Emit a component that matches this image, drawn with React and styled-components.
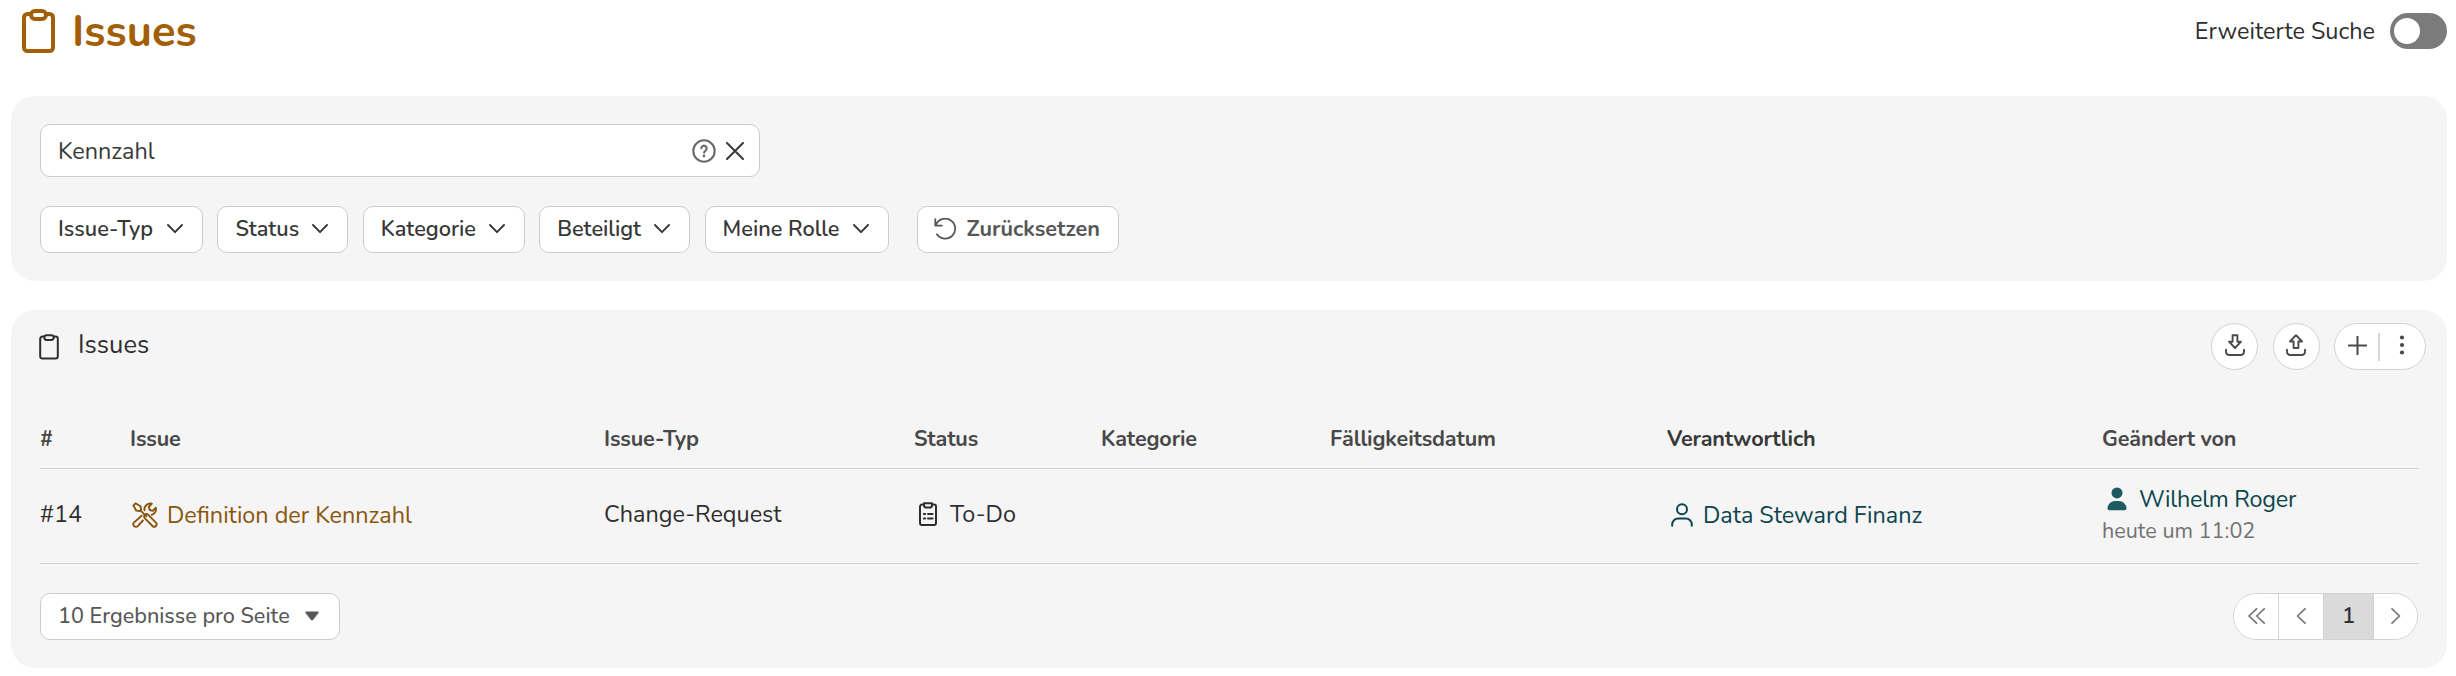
import React from "react";
import styled, { createGlobalStyle } from "styled-components";

const columns = ["#", "Issue", "Issue-Typ", "Status", "Kategorie", "Fälligkeitsdatum", "Verantwortlich", "Geändert von"];

const filters = [
    { label: "Issue-Typ", width: 163 },
    { label: "Status", width: 131 },
    { label: "Kategorie", width: 162 },
    { label: "Beteiligt", width: 151 },
    { label: "Meine Rolle", width: 184 },
];

/* 아이콘 */
const ClipboardIcon = () => (
    <Icon width="33" height="44" viewBox="0 0 33 44" $stroke={4}>
        <path d="M9 5H5.5A3.5 3.5 0 0 0 2 8.5v30A3.5 3.5 0 0 0 5.5 42h22a3.5 3.5 0 0 0 3.5-3.5v-30A3.5 3.5 0 0 0 27.5 5H24" />
        <rect x="9" y="2" width="15" height="8" rx="4" />
    </Icon>
);

const ClipboardSmallIcon = () => (
    <Icon width="20" height="26" viewBox="0 0 20 26" $stroke={2}>
        <path d="M5 2.5H3.5A2.3 2.3 0 0 0 1.2 4.8v17.4a2.3 2.3 0 0 0 2.3 2.3h13a2.3 2.3 0 0 0 2.3-2.3V4.8a2.3 2.3 0 0 0-2.3-2.3H15" />
        <rect x="5.3" y="1.2" width="9.4" height="4.8" rx="2.4" />
    </Icon>
);

const TodoIcon = () => (
    <Icon width="18" height="24" viewBox="0 0 18 24" $stroke={2}>
        <path d="M5 2.6H3A2 2 0 0 0 1 4.600V21a2 2 0 0 0 2 2h12a2 2 0 0 0 2-2V4.600a2 2 0 0 0-2-2h-2" />
        <path d="M5 1.2h8v2a2.4 2.4 0 0 1-2.4 2.4H7.400A2.4 2.4 0 0 1 5 3.200z" />
        <path d="M4.8 12.1h1.4M9 12.1h4.6M4.8 16.5h1.4M9 16.5h4.6" />
    </Icon>
);

const ToolsIcon = () => (
    <Icon width="26" height="26" viewBox="0 0 26 26" $stroke={1.9}>
        <path d="M1.4 3.6 3.5 1.3l5 2.9.6 3.7-1.2 1.2-3.7-.6zM8.7 8.700l5.6 5.6" />
        <path d="M12.9 16.4a2.4 2.4 0 0 1 3.4-3.5l7.6 7.7a2.4 2.4 0 0 1-3.4 3.4z" />
        <path d="M12.5 8.4c-.6-4 2.7-7.5 7.3-6.7l-3 3.3.9 3 3.1.9 3-3.2c.9 3.4-1.2 6.5-4.2 7.2" />
        <path d="M9.6 13.7 2.1 20.4a2.6 2.6 0 0 0 3.7 3.700l5.1-5.6" />
    </Icon>
);

const PersonIcon = () => (
    <Icon width="22" height="24" viewBox="0 0 22 24" $stroke={2}>
        <circle cx="11" cy="6.3" r="5" />
        <path d="M1.2 22.8v-1.3a6 6 0 0 1 6-6h7.6a6 6 0 0 1 6 6v1.3" />
    </Icon>
);

const PersonFillIcon = () => (
    <Icon width="20" height="24" viewBox="0 0 20 24" $stroke={0}>
        <circle cx="10" cy="5.9" r="5.5" fill="currentColor" />
        <path d="M.5 21.5a7.5 7.5 0 0 1 7.5-7.5h4a7.5 7.5 0 0 1 7.5 7.5q0 1.8-1.8 1.8H2.3Q.5 23.3.5 21.5z" fill="currentColor" />
    </Icon>
);

const ChevronIcon = () => (
    <Icon width="16" height="10" viewBox="0 0 16 10" $stroke={1.9}>
        <path d="m1 1 7 7.2L15 1" />
    </Icon>
);

const ResetIcon = () => (
    <Icon width="23" height="23" viewBox="0 0 23 23" $stroke={1.8}>
        <path d="M1.3 1.2v6.4h6.5M1.8 7.3A10 10 0 1 1 2.9 16.2" />
    </Icon>
);

const HelpIcon = () => (
    <Icon width="24" height="24" viewBox="0 0 24 24" $stroke={2.1}>
        <circle cx="12" cy="12" r="10.7" />
        <path d="M9.3 9.3A2.7 2.7 0 1 1 13.7 11.5c-1.100.7-1.6 1-1.6 2.3" />
        <path d="M12 16.9v.2" strokeWidth="2.6" />
    </Icon>
);

const CloseIcon = () => (
    <Icon width="18" height="18" viewBox="0 0 18 18" $stroke={2}>
        <path d="m1 1 16 16M17 1 1 17" />
    </Icon>
);

const ArrowTrayIcon = ({ up }) => (
    <Icon width="20" height="22" viewBox="0 0 20 22" $stroke={1.9}>
        {up ? (
            <path d="M7.6 14V7.5H4L10 1.2l6 6.3h-3.6V14z" />
        ) : (
            <path d="M7.6 1.2h4.8v6.5H16l-6 6.3-6-6.3h3.6z" />
        )}
        <path d="M1 15.8v1.9A3.3 3.3 0 0 0 4.3 21h11.4a3.3 3.3 0 0 0 3.3-3.3v-1.9" />
    </Icon>
);

const PlusIcon = () => (
    <Icon width="19" height="19" viewBox="0 0 19 19" $stroke={2}>
        <path d="M9.5.8v17.4M.8 9.5h17.4" />
    </Icon>
);

const DotsIcon = () => (
    <Icon width="6" height="20" viewBox="0 0 6 20" $stroke={0}>
        <g fill="currentColor">
            <circle cx="3" cy="2.5" r="2.1" />
            <circle cx="3" cy="10" r="2.1" />
            <circle cx="3" cy="17.5" r="2.1" />
        </g>
    </Icon>
);

const CaretIcon = () => (
    <Icon width="14" height="10" viewBox="0 0 14 10" $stroke={0}>
        <path d="M1.2.5h11.6q1.4.2.7 1.4L8.2 8.7q-1.2 1.2-2.4 0L.5 1.9Q-.2.7 1.2.5z" fill="currentColor" />
    </Icon>
);

const PageIcon = ({ d, width = 10 }) => (
    <Icon width={width} height="16" viewBox={`0 0 ${width} 16`} $stroke={1.7}>
        <path d={d} />
    </Icon>
);

function App() {
    return (
        <Page>
            <GlobalStyle />
            <Header>
                <Title>
                    <ClipboardIcon />
                    <h1>Issues</h1>
                </Title>
                <SwitchLabel>
                    Erweiterte Suche
                    <Switch role="switch" aria-checked="false">
                        <Knob />
                    </Switch>
                </SwitchLabel>
            </Header>

            {/* 검색 영역 */}
            <SearchPanel>
                <SearchField>
                    <SearchText>Kennzahl</SearchText>
                    <Tint $color="#6a6a6a">
                        <HelpIcon />
                    </Tint>
                    <CloseIcon />
                </SearchField>
                <FilterRow>
                    {filters.map((f) => (
                        <FilterButton key={f.label} $width={f.width}>
                            {f.label}
                            <ChevronIcon />
                        </FilterButton>
                    ))}
                    <ResetButton>
                        <ResetIcon />
                        Zurücksetzen
                    </ResetButton>
                </FilterRow>
            </SearchPanel>

            {/* 목록 영역 */}
            <ListPanel>
                <ListHeader>
                    <ListTitle>
                        <ClipboardSmallIcon />
                        <h2>Issues</h2>
                    </ListTitle>
                    <Actions>
                        <RoundButton>
                            <ArrowTrayIcon />
                        </RoundButton>
                        <RoundButton>
                            <ArrowTrayIcon up />
                        </RoundButton>
                        <ButtonGroup>
                            <PlusIcon />
                            <Divider />
                            <DotsIcon />
                        </ButtonGroup>
                    </Actions>
                </ListHeader>

                <HeadRow>
                    {columns.map((c) => (
                        <HeadCell key={c} $dark={c === "Verantwortlich"}>
                            {c}
                        </HeadCell>
                    ))}
                </HeadRow>
                <BodyRow>
                    <Cell>#14</Cell>
                    <LinkCell $color="#8a560c" $indent={1} $gap={9}>
                        <ToolsIcon />
                        Definition der Kennzahl
                    </LinkCell>
                    <Cell>Change-Request</Cell>
                    <Cell $indent={5} $gap={13}>
                        <TodoIcon />
                        To-Do
                    </Cell>
                    <Cell />
                    <Cell />
                    <LinkCell $color="#0b454b" $indent={4} $gap={10}>
                        <PersonIcon />
                        Data Steward Finanz
                    </LinkCell>
                    <ChangedCell>
                        <Editor>
                            <Tint $color="#1d5b61">
                                <PersonFillIcon />
                            </Tint>
                            Wilhelm Roger
                        </Editor>
                        <ChangedAt>heute um 11:02</ChangedAt>
                    </ChangedCell>
                </BodyRow>

                <ListFooter>
                    <PageSize>
                        10 Ergebnisse pro Seite
                        <CaretIcon />
                    </PageSize>
                    <Pagination>
                        <PageButton $width={44}>
                            <PageIcon width={17} d="M8.5.8 1 8l7.5 7.2M16.2.8 8.7 8l7.5 7.2" />
                        </PageButton>
                        <PageButton $width={45}>
                            <PageIcon d="M9 .8 1.5 8 9 15.2" />
                        </PageButton>
                        <PageButton $width={50} $active>
                            1
                        </PageButton>
                        <PageButton $width={44}>
                            <PageIcon d="M1 .8 8.5 8 1 15.2" />
                        </PageButton>
                    </Pagination>
                </ListFooter>
            </ListPanel>
        </Page>
    );
}

export default App;

const GlobalStyle = createGlobalStyle`
    * {
        box-sizing: border-box;
    }
    body {
        margin: 0;
        background: #fff;
    }
    h1, h2 {
        margin: 0;
        font: inherit;
    }
    button {
        margin: 0;
        font: inherit;
    }
`;

const Page = styled.div`
    width: 100%;
    height: 676px;
    padding: 0 9px 0 11px;
    overflow: hidden;
    font-family: "Nunito", "Open Sans", sans-serif;
    font-size: 23.4px;
    line-height: 30px;
    color: #2e2e2e;
    white-space: nowrap;
`;

const Icon = styled.svg`
    flex: none;
    display: block;
    fill: none;
    stroke: ${(props) => (props.$stroke ? "currentColor" : "none")};
    stroke-width: ${(props) => props.$stroke};
    stroke-linecap: round;
    stroke-linejoin: round;
`;

const Tint = styled.span`
    color: ${(props) => props.$color};
`;

const Header = styled.div`
    display: flex;
    justify-content: space-between;
    align-items: center;
    height: 62px;
    margin-bottom: 34px;
    padding-left: 11px;
`;

const Title = styled.div`
    display: flex;
    align-items: center;
    gap: 17px;
    color: #a25f06;
    font-size: 43.5px;
    font-weight: 700;
    line-height: 62px;

    h1 {
        padding-top: 2px;
    }
`;

const SwitchLabel = styled.label`
    display: flex;
    align-items: center;
    gap: 15px;
`;

const Switch = styled.span`
    display: flex;
    align-items: center;
    width: 57px;
    height: 36px;
    padding: 0 3px 0 4px;
    border-radius: 18px;
    background: #7b7b7b;
`;

const Knob = styled.span`
    width: 26px;
    height: 26px;
    border-radius: 50%;
    background: #fff;
`;

const Panel = styled.section`
    border-radius: 24px;
    background: #f5f5f5;
`;

const SearchPanel = styled(Panel)`
    height: 185px;
    margin-bottom: 29px;
    padding: 28px 29px;
`;

const SearchField = styled.div`
    display: flex;
    align-items: center;
    width: 720px;
    height: 53px;
    margin-bottom: 29px;
    padding: 0 15px 0 17px;
    border: 1px solid #cccccc;
    border-radius: 10px;
    background: #fff;
    color: #383838;
    gap: 10px;
`;

const SearchText = styled.span`
    flex: 1;
    padding-top: 1px;
`;

const FilterRow = styled.div`
    display: flex;
    gap: 14.4px;
`;

const FilterButton = styled.button`
    display: flex;
    align-items: center;
    justify-content: space-between;
    width: ${(props) => props.$width}px;
    height: 47px;
    padding: 0 19px 1px 17px;
    border: 1px solid #cccccc;
    border-radius: 10px;
    background: #fff;
    color: #383838;
    font-size: 21.7px;
    font-weight: 600;
`;

const ResetButton = styled(FilterButton)`
    width: 202px;
    margin-left: 14px;
    padding: 0 18px 1px 16px;
    color: #575757;
    font-weight: 700;
`;

const ListPanel = styled(Panel)`
    height: 358px;
    padding: 0 29px;
`;

const ListHeader = styled.div`
    display: flex;
    align-items: center;
    justify-content: space-between;
    height: 73px;
    margin-right: -8px;
`;

const ListTitle = styled.div`
    display: flex;
    align-items: center;
    gap: 19px;
    margin-left: -1px;
    font-size: 25.5px;

    h2 {
        margin-top: -3px;
    }
`;

const Actions = styled.div`
    display: flex;
    gap: 14.5px;
    color: #4a4a4a;
`;

const RoundButton = styled.button`
    display: flex;
    align-items: center;
    justify-content: center;
    width: 47px;
    height: 47px;
    padding: 0 0 3px;
    border: 1px solid #d2d2d2;
    border-radius: 50%;
    background: #fff;
    color: inherit;
`;

const ButtonGroup = styled.div`
    display: flex;
    align-items: center;
    justify-content: space-between;
    width: 92px;
    height: 47px;
    padding: 0 20px 3px 13px;
    border: 1px solid #d2d2d2;
    border-radius: 24px;
    background: #fff;
`;

const Divider = styled.span`
    width: 2px;
    height: 28px;
    margin: 3px 8px 0 0;
    background: #d6d6d6;
`;

const Row = styled.div`
    display: grid;
    grid-template-columns: 90px 474px 310px 187px 229px 337px 435px 1fr;
    align-items: center;
    border-bottom: 1px solid #d0d0d0;
`;

const HeadRow = styled(Row)`
    height: 86px;
    padding-top: 26px;
    font-size: 21.6px;
    font-weight: 700;
    letter-spacing: -0.15px;
`;

const HeadCell = styled.div`
    color: ${(props) => (props.$dark ? "#383838" : "#484848")};
`;

const BodyRow = styled(Row)`
    height: 95px;
    padding-bottom: 5px;
`;

const Cell = styled.div`
    display: flex;
    align-items: center;
    gap: ${(props) => props.$gap || 0}px;
    padding-left: ${(props) => props.$indent || 0}px;
`;

const LinkCell = styled(Cell)`
    padding-top: 2px;
    padding-left: ${(props) => props.$indent + (props.$gap === 9 ? 1 : 0)}px;
    color: ${(props) => props.$color};
`;

const ChangedCell = styled.div`
    padding-top: 2px;
`;

const Editor = styled.div`
    display: flex;
    align-items: center;
    gap: 12px;
    padding-left: 5px;
    color: #0b454b;
    letter-spacing: -0.25px;
`;

const ChangedAt = styled.div`
    margin-top: 2px;
    color: #727272;
    font-size: 21.6px;
`;

const ListFooter = styled.div`
    display: flex;
    justify-content: space-between;
    padding-top: 29px;
    font-size: 22px;
    font-weight: 500;
`;

const PageSize = styled(FilterButton)`
    width: 300px;
    padding-right: 20px;
    color: #585858;
    font-size: 21.6px;
    font-weight: 500;
`;

const Pagination = styled.div`
    display: flex;
    width: 185px;
    height: 47px;
    border: 1px solid #d2d2d2;
    border-radius: 24px;
    background: #fff;
    overflow: hidden;
`;

const PageButton = styled.button`
    display: flex;
    align-items: center;
    justify-content: center;
    width: ${(props) => props.$width}px;
    padding: 0 0 2px;
    border: 0;
    background: ${(props) => (props.$active ? "#dadada" : "#fff")};
    color: ${(props) => (props.$active ? "#333" : "#777")};
    font-weight: 600;

    & + & {
        border-left: 1px solid #d2d2d2;
    }
`;
